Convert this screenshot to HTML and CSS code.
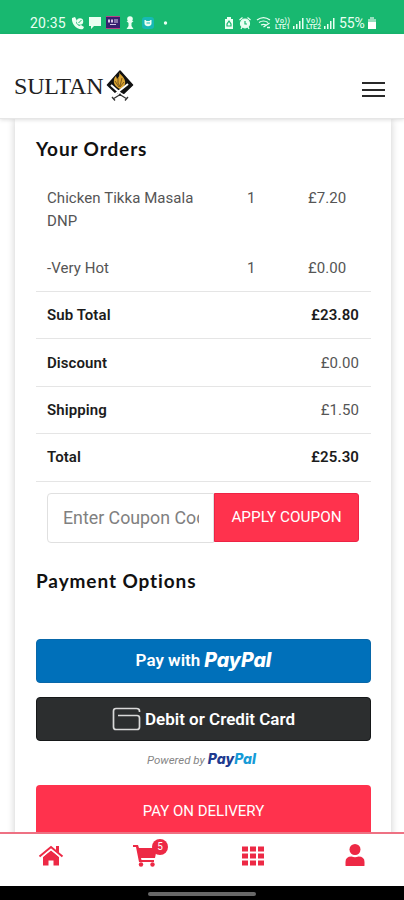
FILE: index.html
```
<!DOCTYPE html>
<html lang="en">
<head>
<meta charset="utf-8">
<title>Sultan - Checkout</title>
<link rel="stylesheet" href="styles.css">
</head>
<body>
<div class="app">
  <div class="status">
    <span class="clock">20:35</span>
    <svg class="status-left" width="100" height="16" viewBox="0 0 100 16" fill="#eafff2">
      <path d="M1 3l3-1 2 4-1 2 3 3 2-1 3 2-1 2c-5 2-12-5-11-11z"/>
      <circle cx="9" cy="6.500" r="3.200"/><path d="M7.500 8l3-3" stroke="#18b870"/>
      <path d="M18 2h12v9h-7l-3 3v-3h-2z"/>
      <path fill="#38206f" d="M35 1h14v13H35z"/><path stroke="#b84487" stroke-width="1" d="M35 1.500h14M35 13.500h14"/><path d="M37 4.500h2v3h-2zM40 4.500h2v3h-2zM43 4.500h4v1h-4zM43 6.500h4v1h-4zM39 9h6v1h-6z" fill="#d8c6e8"/>
      <circle cx="59" cy="4" r="2.800"/><path d="M55.500 6h7l-2 2v3l2 3h-7l2-3V8z"/>
      <rect x="71" y="2" width="12" height="12" rx="3" fill="#16b9b4"/><path d="M73.500 5h1l1 1h3l1-1h1v3.500c0 3.500-7 3.500-7 0z"/><path d="M75.500 8h3.500" stroke="#16b9b4"/>
      <circle cx="94.500" cy="8" r="1.700"/>
    </svg>
    <svg class="status-right" width="114" height="16" viewBox="0 0 114 16" fill="none" stroke="#eafff2" stroke-width="1.200">
      <path fill="#eafff2" stroke="none" d="M3 2h4v2h2v10H1V4h2z"/><path stroke="#18b870" d="M5 6L3 9v2h4V9z"/>
      <circle cx="21" cy="8.500" r="4.500" fill="#eafff2"/><path d="M15.500 5l3-2.500M23.500 2.500l3 2.500M18 12l-1 2M24 12l1 2"/><path stroke="#18b870" d="M21 6v3h2"/>
      <path d="M33 5c4-3 9-3 13 0M35 7.500c3-2 6-2 9 0M37 10c2-1 3-1 5 0"/><path d="M39.500 12l6-4M43 12.500h3" stroke-width="1.500"/>
      <g fill="#eafff2" stroke="none"><path d="M69 11h1.500v3H69zM72 9h1.500v5H72zM75 6h1.500v8H75zM78 3h1.500v11H78zM100 11h1.500v3H100zM103 9h1.500v5H103zM106 6h1.500v8H106zM109 3h1.500v11H109z"/></g>
      <g class="lte"><text x="51" y="7.500" textLength="15">Vo))</text><text x="51" y="14" textLength="15">LTE1</text><text x="82" y="7.500" textLength="15">Vo))</text><text x="82" y="14" textLength="15">LTE2</text></g>
    </svg>
    <span class="percent">55%</span>
    <svg class="battery" width="10" height="14" viewBox="0 0 10 14" fill="#fff"><path opacity=".55" d="M3 1h4v2H3zM1 3h8v4H1z"/><path d="M1 6h8v7H1z"/></svg>
  </div>

  <header class="header">
    <div class="brand">
      <span class="brand-name">SULTAN</span>
      <svg width="28" height="32" viewBox="0 0 28 32">
        <path d="M14 1l12.500 14L14 27 1.500 15z" fill="#111" stroke="#111" stroke-width="1.500" stroke-linejoin="round"/>
        <path d="M13 2c1 3 5 4 6 9 1 4-2 7-5 8-4-2-7-5-6-9 0-2 1-3 2-4l1 3c2-2 3-4 2-7z" fill="#d9a331"/>
        <path d="M12 8v5l2 4M16 8l-2 8M9 11l4 6M18 12l-4 5" fill="none" stroke="#624416" stroke-width=".8"/>
        <path d="M5 15l9 8M22 14L8 25" fill="none" stroke="#fff" stroke-width="2"/>
        <path d="M7 26l7 3 7-3-7-4z" fill="#fff"/>
        <path d="M15 24l-8 5M13 24l8 5M6 27l3 3.500M22 27l-3 3.500" fill="none" stroke="#333" stroke-width="1.300"/>
      </svg>
    </div>
    <div class="menu"><i></i><i></i><i></i></div>
  </header>

  <main class="main">
    <section class="card">
      <h2 class="orders-title">Your Orders</h2>
      <div class="item first"><span>Chicken Tikka Masala<br>DNP</span><span>1</span><span>£7.20</span></div>
      <div class="item"><span class="hot">-Very Hot</span><span>1</span><span>£0.00</span></div>
      <div class="total"><b class="sub">Sub Total</b><b>£23.80</b></div>
      <div class="total"><b>Discount</b><span>£0.00</span></div>
      <div class="total"><b>Shipping</b><span>£1.50</span></div>
      <div class="total"><b>Total</b><b>£25.30</b></div>
      <div class="coupon"><div class="field"><span>Enter Coupon Code</span></div><button>APPLY COUPON</button></div>
      <h2 class="payment-title">Payment Options</h2>
      <button class="pay paypal"><span class="with">Pay with</span><span class="logo">PayPal</span></button>
      <button class="pay debit">
        <svg width="29" height="24" viewBox="0 0 29 24" fill="none" stroke="#d9d9d9" stroke-width="1.700"><path d="M27.500 5V4q0-2.500-3-2.500H4Q1.500 1.500 1.500 4v16q0 2.500 2.500 2.500h21q2.500 0 2.500-2.500V11q0-2.500-2.500-2.500H6"/></svg>
        <span>Debit or Credit Card</span>
      </button>
      <div class="powered"><span>Powered by</span><b class="logo"><span class="navy">Pay</span><span class="sky">Pal</span></b></div>
      <button class="delivery">PAY ON DELIVERY</button>
    </section>
  </main>

  <nav class="tabs">
    <a><svg width="26" height="24" viewBox="0 0 26 24"><path d="M1.500 12.500L13 3l11.500 9.500" fill="none" stroke="#ed2945" stroke-width="2"/><path d="M18 2h3v7l-3-2.500zM5 13l8-6.500 8 6.500v8.500h-5.500v-5h-5v5H5z" fill="#ed2945"/><path d="M3 14L13 5.500 23 14" fill="none" stroke="#fff" stroke-width=".9"/></svg></a>
    <a class="cart"><svg width="26" height="24" viewBox="0 0 26 24" fill="#ed2945"><path d="M1 1h5l1 3h18l-2 10H9l.5 2H22v2H7L4 3H1z"/><circle cx="9" cy="20.500" r="2.200"/><circle cx="20.500" cy="20.500" r="2.200"/></svg><span class="badge">5</span></a>
    <a><svg width="22" height="20" viewBox="0 0 22 20" fill="#ed2945"><path d="M0 .5h6v5H0zM8 .5h6v5H8zM16 .5h6v5h-6zM0 7.500h6v5H0zM8 7.500h6v5H8zM16 7.500h6v5h-6zM0 14.500h6v5H0zM8 14.500h6v5H8zM16 14.500h6v5h-6z"/></svg></a>
    <a><svg width="20" height="22" viewBox="0 0 20 22" fill="#ed2945"><circle cx="10" cy="5.500" r="5.500"/><path d="M.5 21.500V18q0-5.500 6-5.500 3.500 1.500 7 0 6 0 6 5.500v3.500q0 .5-1 .5h-17q-1 0-1-.5z"/></svg></a>
  </nav>
  <div class="system"><div class="handle"></div></div>
</div>
</body>
</html>
```

FILE: styles.css
```
* { box-sizing: border-box; }
body { margin: 0; background: #fff; font-family: Roboto, sans-serif; color: #555; }
button { border: 0; padding: 0; font-family: inherit; color: #fff; }
svg { display: block; flex: none; }
.app { width: 404px; height: 900px; display: flex; flex-direction: column; overflow: hidden; }

.status { height: 34px; flex: none; background: #18b870; color: #eafff2; display: flex; align-items: flex-start; padding: 15px 0 0 30px; font-size: 14px; line-height: 17px; }
.clock { width: 41px; letter-spacing: .2px; }
.status-right { margin-left: 53px; }
.percent { margin-left: 1px; width: 28px; letter-spacing: -.1px; }
.battery { margin-top: 1px; }
.lte { fill: #eafff2; stroke: none; font-size: 7px; font-weight: 500; }

.header { height: 85px; flex: none; display: flex; justify-content: space-between; align-items: flex-start; padding: 36px 19px 0 14px; border-bottom: 1px solid #e6e6e6; box-shadow: 0 1px 4px #0002; position: relative; z-index: 1; }
.brand { display: flex; gap: 2px; align-items: flex-start; }
.brand-name { width: 90px; font-family: "Liberation Serif", serif; font-size: 24px; line-height: 32px; letter-spacing: -.2px; color: #222; white-space: nowrap; }
.menu { width: 23px; margin-top: 12px; display: flex; flex-direction: column; gap: 4.500px; }
.menu i { height: 2px; background: #292929; }

.main { height: 713px; flex: none; overflow: hidden; padding: 0 13px 0 15px; }
.card { height: 730px; padding: 18px 20px 0 21px; box-shadow: 0 0 8px #0003; display: flex; flex-direction: column; }
h2 { margin: 0; font-family: Lato, sans-serif; font-size: 19px; line-height: 24px; font-weight: 700; color: #111; white-space: nowrap; flex: none; }
.orders-title { letter-spacing: .9px; }
.item { height: 47px; flex: none; padding: 13px 0 0 11px; display: grid; grid-template-columns: 200px 61px 60px; font-size: 15px; line-height: 23px; letter-spacing: .06px; }
.item.first { height: 70px; margin-top: 13px; }
.total { height: 47.400px; flex: none; border-top: 1px solid #e5e5e5; padding: 0 12px 0 11px; display: flex; justify-content: space-between; align-items: center; font-size: 15px; letter-spacing: .08px; }
.total b { font-weight: 600; color: #1c1c1c; }

.coupon { height: 61px; flex: none; border-top: 1px solid #e5e5e5; padding: 11px 12px 0 11px; display: flex; }
.field { width: 167px; height: 50px; border: 1px solid #e0e0e0; border-radius: 4px 0 0 4px; padding: 0 14px 0 15px; font-size: 17.800px; line-height: 47px; color: #808080; }
.field span { display: block; overflow: hidden; white-space: nowrap; }
.coupon button { width: 146px; height: 49px; background: #ff324d; border: 1px solid #ed2345; border-radius: 0 3px 3px 0; font-size: 15.300px; }
.payment-title { margin-top: 27px; letter-spacing: .9px; }

.pay { height: 44px; flex: none; border-radius: 4px; display: flex; align-items: center; justify-content: center; font-size: 17px; font-weight: 600; }
.paypal { margin-top: 46px; background: #0070ba; border: 1px solid #0867a9; gap: 4px; padding-bottom: 1px; }
.logo { font-family: Inter, sans-serif; font-style: italic; font-weight: 800; font-feature-settings: "cv11"; }
.paypal .logo { font-size: 19.500px; }
.debit { margin-top: 14px; background: #2c2e2f; border: 1px solid #161819; gap: 4px; }
.powered { height: 44px; flex: none; display: flex; justify-content: center; align-items: baseline; gap: 3px; padding: 9px 4px 0 0; font-size: 11.500px; line-height: 17px; font-style: italic; color: #858585; }
.powered .logo { font-size: 14px; }
.navy { color: #203a8f; }
.sky { color: #169bd7; }
.delivery { height: 52px; flex: none; border-radius: 4px; background: #ff324d; font-size: 15px; }

.tabs { height: 54px; flex: none; border-top: 2px solid #ee7183; display: grid; grid-template-columns: repeat(4, 101px); background: #fff; }
.tabs a { display: flex; justify-content: center; align-items: flex-start; padding-top: 12px; }
.tabs a:nth-child(1) { padding-top: 10px; }
.tabs .cart { position: relative; padding: 10px 14px 0 0; }
.badge { position: absolute; left: 51px; top: 5px; width: 16px; height: 16px; border-radius: 50%; background: #ed2945; color: #fff; font-size: 10px; line-height: 16px; text-align: center; }
.tabs a:nth-child(4) { padding: 10px 0 0 2px; }
.system { height: 14px; flex: none; background: #000; padding-top: 6px; }
.handle { width: 108px; height: 4px; margin: 0 auto; border-radius: 2px; background: #686868; }
```
